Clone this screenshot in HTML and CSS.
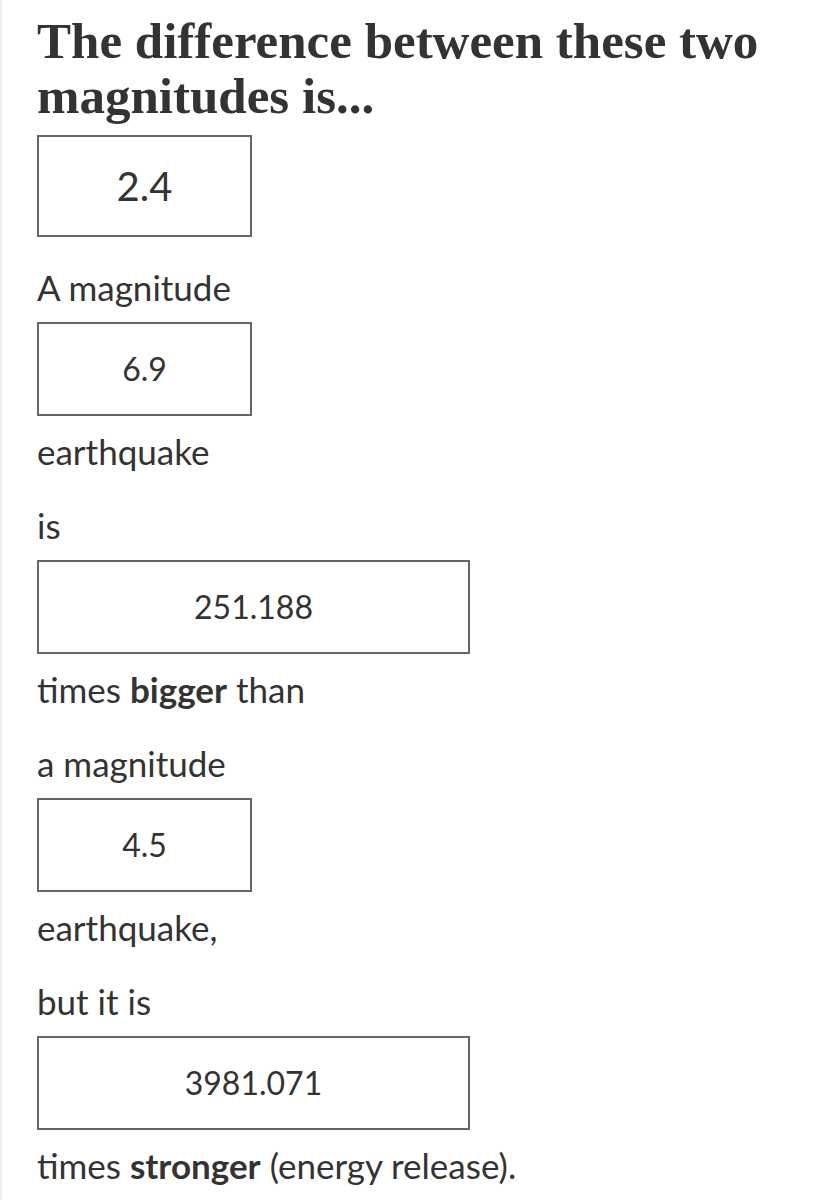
FILE: index.html
```html
<!DOCTYPE html>
<html>

<head>
  <meta charset="utf-8" />
  <title>Earthquake magnitude comparison</title>
  <link rel="stylesheet" href="styles.css">
</head>

<body>
  <div class="page">
    <div class="group">
      <h2 class="title">The difference between these two magnitudes is...</h2>
      <div class="box box-big">2.4</div>
    </div>

    <div class="group">
      <p class="label">A magnitude</p>
      <div class="box">6.9</div>
      <p class="label">earthquake</p>
    </div>

    <div class="group">
      <p class="label">is</p>
      <div class="box box-wide">251.188</div>
      <p class="label">times <b>bigger</b> than</p>
    </div>

    <div class="group">
      <p class="label">a magnitude</p>
      <div class="box">4.5</div>
      <p class="label">earthquake,</p>
    </div>

    <div class="group">
      <p class="label">but it is</p>
      <div class="box box-wide">3981.071</div>
      <p class="label">times <b>stronger</b> (energy release).</p>
    </div>
  </div>
</body>

</html>
```

FILE: styles.css
```css
body {
  margin: 0;
  padding: 0;
  background-color: white;
  color: #333;
  font-family: Lato, "Noto Sans", sans-serif;
}

.page {
  border-left: 2px solid #eee;
  padding: 0 0 0 35px;
  min-height: 1200px;
  box-sizing: border-box;
}

.group {
  display: flex;
  flex-direction: column;
  align-items: flex-start;
  gap: 11px;
  margin-bottom: 26px;
}

.title {
  margin: 0;
  padding-top: 14px;
  font-family: "Liberation Serif", serif;
  font-weight: bold;
  font-size: 51px;
  line-height: 55px;
  color: #333;
}

.label {
  margin: 0;
  font-size: 35px;
  line-height: 48px;
}

.label b {
  font-weight: bold;
}

.box {
  width: 211px;
  padding: 21px 0;
  border: 2px solid #666;
  text-align: center;
  font-size: 32px;
  line-height: 48px;
}

.box-big {
  font-size: 40px;
  line-height: 56px;
}

.box-wide {
  width: 429px;
}
```
